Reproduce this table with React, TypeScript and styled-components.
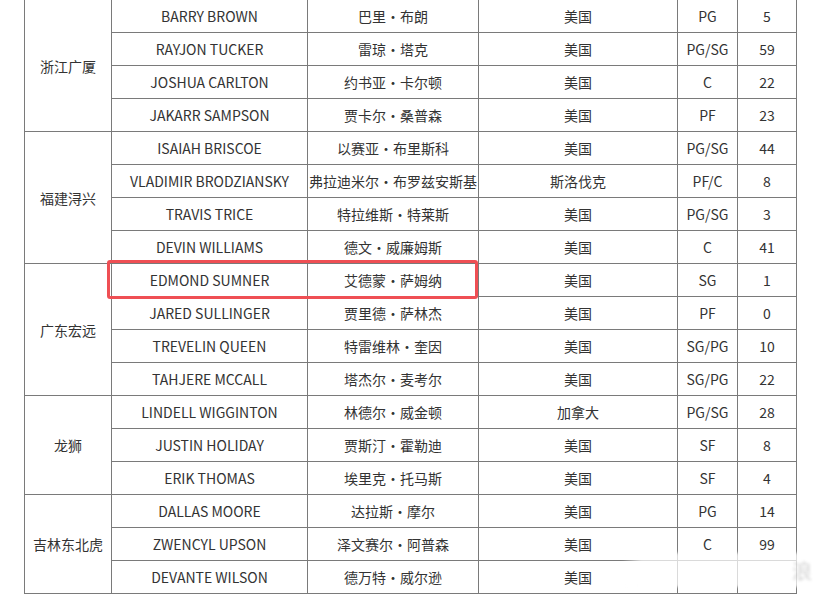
import React from "react";
import styled, { createGlobalStyle } from "styled-components";

const Global = createGlobalStyle`
  html, body { margin: 0; padding: 0; background: #fff; }
  body { font-family: "Noto Sans CJK SC", "Noto Sans", sans-serif; overflow: hidden; }
`;

const Page = styled.div`
  position: relative;
  width: 814px;
  height: 594px;
  overflow: hidden;
  padding-left: 24px;
  box-sizing: border-box;
`;

const Table = styled.table`
  border-collapse: collapse;
  table-layout: fixed;
  width: 772px;
  margin-top: -1px;
  font-size: 14px;
  color: #333;
`;

const Col = styled.col<{ $w: number }>`
  width: ${(p) => p.$w}px;
`;

const Cell = styled.td`
  border: 1px solid #7a7a7a;
  height: 32px;
  padding: 0;
  text-align: center;
  vertical-align: middle;
  white-space: nowrap;
  line-height: 20px;
`;

const Highlight = styled.div`
  position: absolute;
  left: 107px;
  top: 260px;
  width: 371px;
  height: 39px;
  box-sizing: border-box;
  border: 3px solid #ef4f54;
  border-radius: 3px;
  pointer-events: none;
`;

const Watermark = styled.div`
  position: absolute;
  left: 622px;
  top: 553px;
  width: 192px;
  height: 34px;
  background: linear-gradient(
    90deg,
    rgba(255, 255, 255, 0) 0%,
    rgba(255, 255, 255, 0.72) 10%,
    rgba(255, 255, 255, 0.72) 100%
  );
  filter: blur(1.5px);
  display: flex;
  align-items: center;
  justify-content: flex-end;
  padding-right: 2px;
  box-sizing: border-box;
  pointer-events: none;
`;

const WatermarkText = styled.span`
  color: rgba(175, 175, 175, 0.55);
  font-size: 20px;
  filter: blur(0.6px);
`;

type Player = [string, string, string, string, string];
type Group = { team: string; players: Player[] };

const groups: Group[] = [
  {
    team: "浙江广厦",
    players: [
      ["BARRY BROWN", "巴里・布朗", "美国", "PG", "5"],
      ["RAYJON TUCKER", "雷琼・塔克", "美国", "PG/SG", "59"],
      ["JOSHUA CARLTON", "约书亚・卡尔顿", "美国", "C", "22"],
      ["JAKARR SAMPSON", "贾卡尔・桑普森", "美国", "PF", "23"],
    ],
  },
  {
    team: "福建浔兴",
    players: [
      ["ISAIAH BRISCOE", "以赛亚・布里斯科", "美国", "PG/SG", "44"],
      ["VLADIMIR BRODZIANSKY", "弗拉迪米尔・布罗兹安斯基", "斯洛伐克", "PF/C", "8"],
      ["TRAVIS TRICE", "特拉维斯・特莱斯", "美国", "PG/SG", "3"],
      ["DEVIN WILLIAMS", "德文・威廉姆斯", "美国", "C", "41"],
    ],
  },
  {
    team: "广东宏远",
    players: [
      ["EDMOND SUMNER", "艾德蒙・萨姆纳", "美国", "SG", "1"],
      ["JARED SULLINGER", "贾里德・萨林杰", "美国", "PF", "0"],
      ["TREVELIN QUEEN", "特雷维林・奎因", "美国", "SG/PG", "10"],
      ["TAHJERE MCCALL", "塔杰尔・麦考尔", "美国", "SG/PG", "22"],
    ],
  },
  {
    team: "龙狮",
    players: [
      ["LINDELL WIGGINTON", "林德尔・威金顿", "加拿大", "PG/SG", "28"],
      ["JUSTIN HOLIDAY", "贾斯汀・霍勒迪", "美国", "SF", "8"],
      ["ERIK THOMAS", "埃里克・托马斯", "美国", "SF", "4"],
    ],
  },
  {
    team: "吉林东北虎",
    players: [
      ["DALLAS MOORE", "达拉斯・摩尔", "美国", "PG", "14"],
      ["ZWENCYL UPSON", "泽文赛尔・阿普森", "美国", "C", "99"],
      ["DEVANTE WILSON", "德万特・威尔逊", "美国", "", ""],
    ],
  },
];

const widths = [87, 196, 171, 199, 60, 59];

export default function App() {
  return (
    <>
      <Global />
      <Page>
        <Table>
          <colgroup>
            {widths.map((w, i) => (
              <Col key={i} $w={w} />
            ))}
          </colgroup>
          <tbody>
            {groups.map((g) =>
              g.players.map((p, i) => (
                <tr key={g.team + p[0]}>
                  {i === 0 && <Cell rowSpan={g.players.length}>{g.team}</Cell>}
                  {p.map((v, j) => (
                    <Cell key={j}>{v}</Cell>
                  ))}
                </tr>
              ))
            )}
          </tbody>
        </Table>
        <Highlight />
        <Watermark>
          <WatermarkText>浪</WatermarkText>
        </Watermark>
      </Page>
    </>
  );
}
